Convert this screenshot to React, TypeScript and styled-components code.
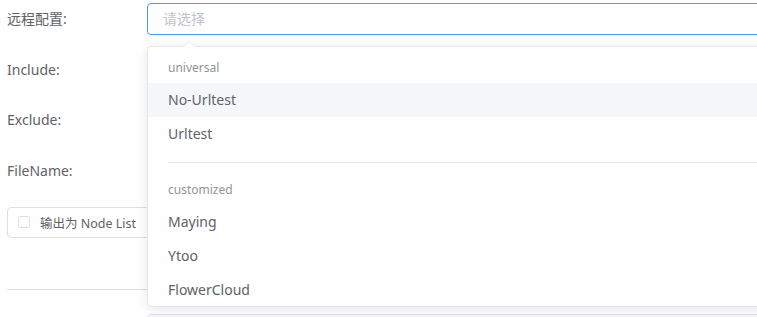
import React from "react";
import styled, { createGlobalStyle } from "styled-components";

const Global = createGlobalStyle`
  html, body { margin: 0; padding: 0; background: #fff; }
  body { overflow: hidden; font-family: "Noto Sans", "Noto Sans CJK SC", sans-serif; }
  #root { width: 757px; height: 317px; overflow: hidden; }
`;

const Page = styled.div`
  position: relative;
  width: 1200px;
  padding: 3px 0 0 7px;
`;

const FormItem = styled.div<{ $gap?: number }>`
  display: flex;
  align-items: center;
  height: 32px;
  margin-bottom: ${(p) => (p.$gap ?? 18.5)}px;
`;

const Label = styled.div`
  width: 140px;
  flex: none;
  font-size: 14px;
  color: #606266;
  line-height: 32px;
`;

const Content = styled.div`
  position: relative;
  flex: 1;
  height: 32px;
`;

const Input = styled.div<{ $focus?: boolean }>`
  box-sizing: border-box;
  height: 32px;
  width: 100%;
  border: 1px solid ${(p) => (p.$focus ? "#409eff" : "#dcdfe6")};
  border-radius: 4px;
  padding: 0 15px;
  font-size: 14px;
  line-height: 30px;
  color: #c0c4cc;
  background: #fff;
`;

const Dropdown = styled.div`
  position: absolute;
  z-index: 10;
  top: 43px;
  left: 0;
  width: 900px;
  box-sizing: border-box;
  border: 1px solid #e4e7ed;
  border-radius: 4px;
  background: #fff;
  box-shadow: 0 2px 12px 0 rgba(0, 0, 0, 0.1);
`;

const Arrow = styled.div`
  position: absolute;
  top: -6px;
  left: 35px;
  width: 0;
  height: 0;
  border: 6px solid transparent;
  border-top-width: 0;
  border-bottom-color: #ebeef5;
  filter: drop-shadow(0 2px 12px rgba(0, 0, 0, 0.03));
  &::after {
    content: "";
    position: absolute;
    top: 1px;
    left: -6px;
    border: 6px solid transparent;
    border-top-width: 0;
    border-bottom-color: #fff;
  }
`;

const List = styled.ul`
  list-style: none;
  margin: 0;
  padding: 6px 0;
  max-height: 247px;
  overflow: hidden;
`;

const Group = styled.li<{ $divider?: boolean }>`
  position: relative;
  padding-bottom: 24px;
  &::after {
    content: "";
    display: ${(p) => (p.$divider ? "block" : "none")};
    position: absolute;
    left: 20px;
    right: 20px;
    bottom: 12px;
    height: 1px;
    background: #e4e7ed;
  }
`;

const GroupTitle = styled.div`
  padding-left: 20px;
  font-size: 12px;
  color: #909399;
  line-height: 30px;
`;

const Option = styled.div<{ $hover?: boolean }>`
  padding: 0 20px;
  height: 34px;
  line-height: 34px;
  font-size: 14px;
  color: #606266;
  background: ${(p) => (p.$hover ? "#f5f7fa" : "transparent")};
`;

const CheckboxBox = styled.div`
  box-sizing: border-box;
  display: flex;
  align-items: center;
  width: 260px;
  height: 31px;
  margin-top: 20px;
  border: 1px solid #dcdfe6;
  border-radius: 4px;
  padding-left: 10px;
`;

const CheckInner = styled.span`
  box-sizing: border-box;
  width: 12px;
  height: 12px;
  border: 1px solid #dcdfe6;
  border-radius: 2px;
  background: #fff;
  flex: none;
`;

const CheckLabel = styled.span`
  padding-left: 10px;
  font-size: 12.5px;
  color: #606266;
`;

const Rule = styled.div`
  margin-top: 51px;
  width: 400px;
  height: 1px;
  background: #dcdfe6;
`;

const BottomRow = styled.div`
  margin-top: 24px;
  margin-left: 140px;
  height: 32px;
  border: 1px solid #dcdfe6;
  border-radius: 4px;
  background: #f5f7fa;
`;

export default function App() {
  return (
    <>
      <Global />
      <Page>
        <FormItem>
          <Label>远程配置:</Label>
          <Content>
            <Input $focus>请选择</Input>
            <Dropdown>
              <Arrow />
              <List>
                <Group $divider>
                  <GroupTitle>universal</GroupTitle>
                  <Option $hover>No-Urltest</Option>
                  <Option>Urltest</Option>
                </Group>
                <Group>
                  <GroupTitle>customized</GroupTitle>
                  <Option>Maying</Option>
                  <Option>Ytoo</Option>
                  <Option>FlowerCloud</Option>
                </Group>
              </List>
            </Dropdown>
          </Content>
        </FormItem>
        <FormItem>
          <Label>Include:</Label>
          <Content>
            <Input />
          </Content>
        </FormItem>
        <FormItem>
          <Label>Exclude:</Label>
          <Content>
            <Input />
          </Content>
        </FormItem>
        <FormItem $gap={0}>
          <Label>FileName:</Label>
          <Content>
            <Input />
          </Content>
        </FormItem>
        <CheckboxBox>
          <CheckInner />
          <CheckLabel>输出为 Node List</CheckLabel>
        </CheckboxBox>
        <Rule />
        <BottomRow />
      </Page>
    </>
  );
}
